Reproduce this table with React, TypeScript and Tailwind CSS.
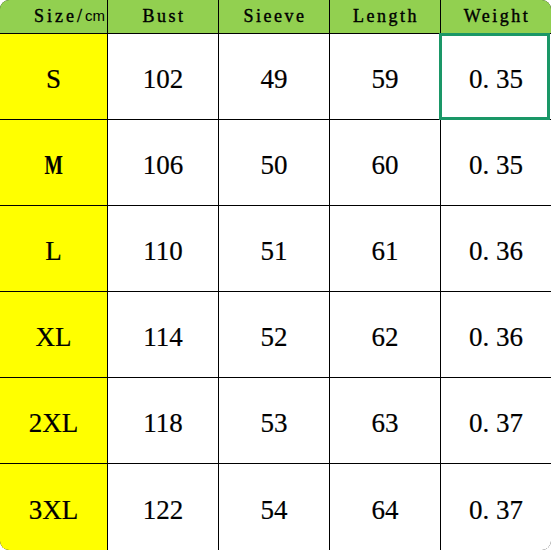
import React from "react";

type Row = { size: string; bust: string; sleeve: string; length: string; weight: string };

const rows: Row[] = [
  { size: "S", bust: "102", sleeve: "49", length: "59", weight: "0. 35" },
  { size: "M", bust: "106", sleeve: "50", length: "60", weight: "0. 35" },
  { size: "L", bust: "110", sleeve: "51", length: "61", weight: "0. 36" },
  { size: "XL", bust: "114", sleeve: "52", length: "62", weight: "0. 36" },
  { size: "2XL", bust: "118", sleeve: "53", length: "63", weight: "0. 37" },
  { size: "3XL", bust: "122", sleeve: "54", length: "64", weight: "0. 37" },
];

const serif = "font-['Liberation_Serif','Times_New_Roman',serif]";

export default function App() {
  return (
    <div className="w-[551px] h-[550px] bg-white">
      <div
        className={`grid grid-cols-[107px_repeat(4,110px)] grid-rows-[33px_repeat(5,85px)_86px] gap-px bg-black rounded-[9px] overflow-hidden w-[551px] h-[550px] ${serif} text-black`}
      >
        {/* header */}
        <div className="bg-[#92d050] flex items-center justify-end pr-[2px] text-[18px] tracking-[3px] [-webkit-text-stroke:0.4px_black]">
          <span>Size/</span>
          <span className="font-['Liberation_Sans',sans-serif] text-[15px] tracking-normal [-webkit-text-stroke:0px]">cm</span>
        </div>
        {["Bust", "Sieeve", "Length", "Weight"].map((h) => (
          <div
            key={h}
            className="bg-[#92d050] flex items-center justify-center text-[18px] tracking-[2.5px] pl-[2px] [-webkit-text-stroke:0.4px_black]"
          >
            {h}
          </div>
        ))}

        {rows.map((r, i) => (
          <React.Fragment key={r.size}>
            <div className="bg-[#ffff00] flex items-center justify-center text-[27px] pt-[6px] [-webkit-text-stroke:0.2px_black]">
              {r.size === "M" ? (
                <span className="inline-block font-bold scale-x-[0.72]">M</span>
              ) : (
                r.size
              )}
            </div>
            <div className="bg-white flex items-center justify-center text-[27px] pt-[6px] [-webkit-text-stroke:0.2px_black]">{r.bust}</div>
            <div className="bg-white flex items-center justify-center text-[27px] pt-[6px] [-webkit-text-stroke:0.2px_black]">{r.sleeve}</div>
            <div className="bg-white flex items-center justify-center text-[27px] pt-[6px] [-webkit-text-stroke:0.2px_black]">{r.length}</div>
            <div className="bg-white relative flex items-center justify-center text-[27px] pt-[6px] [-webkit-text-stroke:0.2px_black]">
              {i === 0 && (
                <div className="absolute -left-[2px] -top-px right-px -bottom-px border-[3px] border-[#1a9767]" />
              )}
              <span className="whitespace-pre">{r.weight}</span>
            </div>
          </React.Fragment>
        ))}
      </div>
    </div>
  );
}
